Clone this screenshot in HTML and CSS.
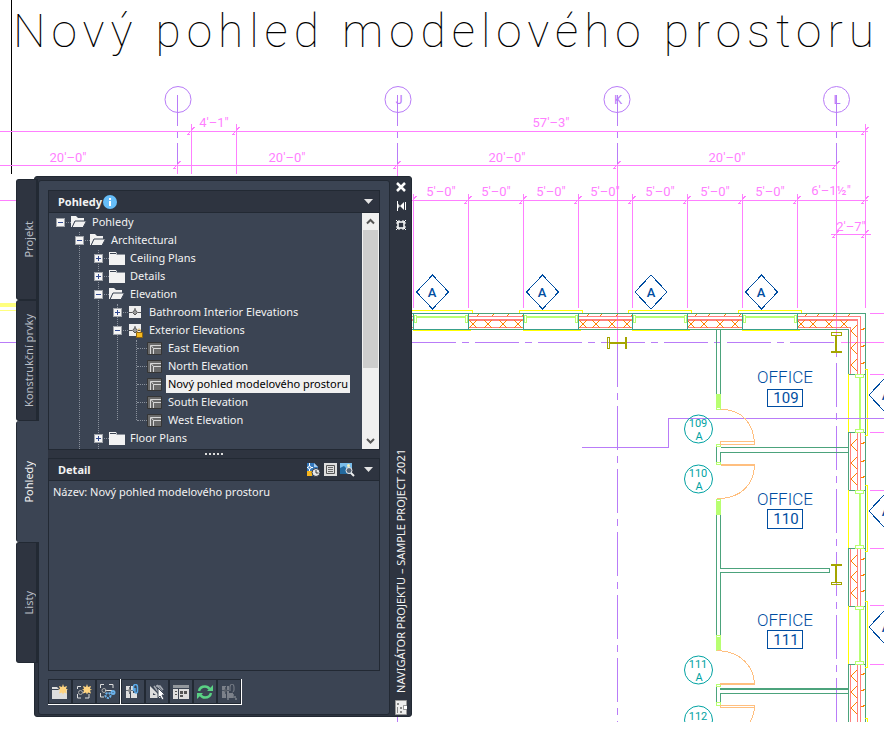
FILE: index.html
```html
<!DOCTYPE html>
<html lang="cs">
<head>
<meta charset="utf-8">
<title>Navigátor projektu</title>
<link rel="stylesheet" href="styles.css">
</head>
<body>
<main class="workspace">
<svg class="drawing" viewBox="0 0 896 733" preserveAspectRatio="xMinYMin meet">
  <defs>
    <clipPath id="sheet"><rect width="884" height="722"/></clipPath>
    <path id="tick" class="dim-line" d="M-4 4L4 -4M-4 3L-1 3M1 -2L4 -4"/>
    <path id="diamond" class="tag-line" d="M0 -17L16 0L0 17L-16 0Z"/>
    <path id="cross" class="hatch" d="M-4 -4L4 4M4 -4L-4 4M4 -8L6 -10"/>
    <path id="chev" class="hatch" d="M6 -6L0 0L6 6M10 -1L15 -3"/>
    <g id="window-h">
      <path class="yellow" d="M-4 0V-2.500H59V0M-1 17.500H57"/>
      <path class="teal-wall" d="M0 .5V16.500H55V.5Z"/>
      <path class="glass thick" d="M1 4H54"/>
      <path class="glass paper" d="M1 2.500H3V9.500H1ZM52 2.500H54V9.500H52Z"/>
    </g>
    <g id="window-v">
      <rect class="paper-fill" x="848" y="0" width="20" height="58"/>
      <path class="yellow" d="M848.500 0V58M865 -4.500H867.500V61.500H865"/>
      <path class="wall" d="M849 .5H866M849 58.500H866M865.500 0V58"/>
      <path class="glass thick" d="M860 2V56"/>
      <path class="glass paper" d="M855.500 .5H863.500V3.500H855.500ZM855.500 55.500H863.500V58.500H855.500Z"/>
    </g>
  </defs>

  <g clip-path="url(#sheet)">
    <text class="sheet-title" x="13" y="47">Nový pohled modelového prostoru</text>
    <path class="ink" d="M11.500 0V174"/>

    <g class="grid">
      <circle cx="178" cy="99.500" r="13"/><circle cx="398" cy="99.500" r="13"/>
      <circle cx="617" cy="99.500" r="13"/><circle cx="836.500" cy="99.500" r="13"/>
      <path d="M177.500 95V126M177.500 132V138M177.500 143V166M397.500 95V126M397.500 132V138M397.500 143V166M617.500 95V126M617.500 132V138M617.500 143V166M836.500 95V126M836.500 132V138M836.500 143V166"/>
      <path d="M397.500 717V722M0 342.500H16"/>
      <path class="dashed" d="M412 342.500H836M617.500 343V722M836.500 300V722"/>
      <path d="M582 447.500H668.500V418.500H884"/>
    </g>
    <g class="grid-label">
      <text x="399" y="104">J</text><text x="618" y="104">K</text><text x="837" y="104">L</text>
    </g>

    <path class="dim-line" d="M0 131.500H868M0 165.500H837M0 200.500H16M412 200.500H868M831 234.500H871
      M191.500 124V174M236.500 124V174M865.500 124V308M177.500 166V174M397.500 166V176M617.500 166V342M836.500 166V342
      M413.500 194V308M468.500 194V308M523.500 194V308M578.500 194V308M632.500 194V308M687.500 194V308M742.500 194V308M797.500 194V308
      M841 342.500H884M870 313.500H884M870 374.500H884M870 432.500H884M870 490.500H884M870 548.500H884M870 605.500H884M870 664.500H884"/>
    <g>
      <use href="#tick" x="191" y="131"/><use href="#tick" x="236" y="131"/><use href="#tick" x="865" y="131"/>
      <use href="#tick" x="177" y="165"/><use href="#tick" x="397" y="165"/><use href="#tick" x="617" y="165"/><use href="#tick" x="836" y="165"/>
      <use href="#tick" x="413" y="200"/><use href="#tick" x="468" y="200"/><use href="#tick" x="523" y="200"/><use href="#tick" x="578" y="200"/>
      <use href="#tick" x="632" y="200"/><use href="#tick" x="687" y="200"/><use href="#tick" x="742" y="200"/><use href="#tick" x="797" y="200"/><use href="#tick" x="865" y="200"/>
      <use href="#tick" x="836" y="234"/><use href="#tick" x="865" y="234"/>
    </g>
    <g class="dim-text">
      <text x="68" y="162">20'–0"</text><text x="214" y="127">4'–1"</text><text x="287" y="162">20'–0"</text>
      <text x="551" y="127">57'–3"</text><text x="507" y="162">20'–0"</text><text x="727" y="162">20'–0"</text>
      <text x="441" y="196">5'–0"</text><text x="496" y="196">5'–0"</text><text x="551" y="196">5'–0"</text><text x="605" y="196">5'–0"</text>
      <text x="660" y="196">5'–0"</text><text x="715" y="196">5'–0"</text><text x="770" y="196">5'–0"</text>
      <text x="831" y="195">6'–1½"</text><text x="851" y="231">2'–7"</text>
    </g>

    <path class="pale-yellow" d="M0 305H16"/><path class="pale-yellow thin" d="M0 310.500H16"/>

    <path class="brick" d="M412 316.500H860.500V722M412 327.500H850.500V722M412 319.500H857.500V722M412 320.500H857"/>
    <g>
      <use href="#cross" x="473" y="324"/><use href="#cross" x="488" y="324"/><use href="#cross" x="503" y="324"/><use href="#cross" x="518" y="324"/>
      <use href="#cross" x="583" y="324"/><use href="#cross" x="596" y="324"/><use href="#cross" x="612" y="324"/><use href="#cross" x="627" y="324"/>
      <use href="#cross" x="691" y="324"/><use href="#cross" x="704" y="324"/><use href="#cross" x="720" y="324"/><use href="#cross" x="735" y="324"/>
      <use href="#cross" x="801" y="324"/><use href="#cross" x="813" y="324"/><use href="#cross" x="829" y="324"/><use href="#cross" x="844" y="324"/>
      <use href="#chev" x="851" y="331"/><use href="#chev" x="851" y="348"/><use href="#chev" x="851" y="365"/>
      <use href="#chev" x="851" y="445"/><use href="#chev" x="851" y="463"/><use href="#chev" x="851" y="479"/>
      <use href="#chev" x="851" y="561"/><use href="#chev" x="851" y="577"/><use href="#chev" x="851" y="593"/>
      <use href="#chev" x="851" y="676"/><use href="#chev" x="851" y="692"/><use href="#chev" x="851" y="708"/>
    </g>
    <path class="wall" d="M412 313.500H865.500V722M412 329.500H848.500V722"/>
    <g>
      <rect class="paper-fill" x="414" y="314" width="54" height="15"/><rect class="paper-fill" x="523" y="314" width="55" height="15"/>
      <rect class="paper-fill" x="632" y="314" width="55" height="15"/><rect class="paper-fill" x="743" y="314" width="54" height="15"/>
    </g>
    <use href="#window-h" x="413.500" y="313"/><use href="#window-h" x="523.500" y="313"/>
    <use href="#window-h" x="632.500" y="313"/><use href="#window-h" x="742.500" y="313"/>
    <use href="#window-v" y="374"/><use href="#window-v" y="490"/><use href="#window-v" y="606"/>
    <path class="yellow" d="M865 718.500H867.500V722"/>
    <path class="grid-line" d="M848 418.500H884"/>

    <path class="wall" d="M716.500 330V394M720.500 330V394M716.500 515V635M720.500 515V568.500H829.500V572.500H720.500V635
      M716.500 446V465M720.500 452V465M720.500 447.500H848M720.500 452.500H848
      M716.500 687V704M720.500 693V704M720 688.500H848M720 689.500H848M720 693.500H848"/>
    <path class="glass-fill" d="M716 394H721V410H716ZM716 499H721V515H716ZM716 635H721V651H716Z"/>
    <path class="glass paper" d="M716.500 407.500H720.500V409.500H716.500ZM716.500 444.500H720.500V446.500H716.500ZM716.500 462.500H720.500V464.500H716.500ZM716.500 499.500H720.500V501.500H716.500ZM716.500 635.500H720.500V637.500H716.500ZM716.500 684.500H720.500V686.500H716.500ZM716.500 702.500H720.500V705.500H716.500Z"/>
    <path class="door" d="M721 409.500C741 409 754 423 754.500 444.500M720.500 441.500H754.500V444.500H720.500Z
      M721 464.500H755M721 465.500H754.500C754 484 741 499 717 498.500
      M717 650.500C740 651 754 666 754.500 684M720 683.500H755M720 684.500H755M720.500 705.500H754.500V707.500H720.500ZM754.500 707Q754 715 750 722"/>

    <path class="column" d="M607.500 337.500H609.500V348.500H607.500ZM610 342.500H626M610 343.500H626M625.500 337V349M626.500 337V349
      M831.500 332.500H841.500V335.500H831.500ZM835.500 336V352M836.500 336V352M831 351.500H842M831 352.500H842
      M831 564.500H842M831 565.500H842M835.500 566V582M836.500 566V582M831.500 582.500H841.500V584.500H831.500Z"/>

    <g>
      <use href="#diamond" x="432.500" y="292"/><use href="#diamond" x="542.500" y="292"/><use href="#diamond" x="651" y="292"/><use href="#diamond" x="761.500" y="292"/>
      <use href="#diamond" x="885" y="395"/><use href="#diamond" x="885" y="511"/><use href="#diamond" x="885" y="627"/>
    </g>
    <g class="tag-text">
      <text x="432" y="297">A</text><text x="542" y="297">A</text><text x="651" y="297">A</text><text x="761" y="297">A</text>
      <text x="886" y="400">A</text><text x="886" y="516">A</text><text x="886" y="632">A</text>
    </g>

    <g class="room">
      <text x="785" y="383">OFFICE</text><text x="785" y="505">OFFICE</text><text x="785" y="626">OFFICE</text>
      <text class="room-no" x="786" y="403">109</text><text class="room-no" x="786" y="524">110</text><text class="room-no" x="786" y="645">111</text>
      <path class="tag-line" d="M767.500 389.500H802.500V406.500H767.500ZM767.500 509.500H802.500V528.500H767.500ZM767.500 630.500H802.500V648.500H767.500Z"/>
    </g>
    <g class="door-tag">
      <circle cx="698.500" cy="429" r="14"/><circle cx="698.500" cy="479" r="14"/><circle cx="698.500" cy="670" r="14"/><circle cx="698.500" cy="720" r="14"/>
      <text x="698" y="427">109</text><text x="699" y="440">A</text>
      <text x="698" y="477">110</text><text x="699" y="490">A</text>
      <text x="698" y="668">111</text><text x="699" y="681">A</text>
      <text x="698" y="720">112</text>
    </g>
  </g>
</svg>

<section class="palette" aria-label="Navigátor projektu">
  <div class="tabs" role="tablist">
    <button class="tab" role="tab"><span>Projekt</span></button>
    <button class="tab" role="tab"><span>Konstrukční prvky</span></button>
    <button class="tab active" role="tab" aria-selected="true"><span>Pohledy</span></button>
    <button class="tab" role="tab"><span>Listy</span></button>
  </div>

  <div class="shell">
    <div class="content">
      <header class="section-head">
        <h2>Pohledy</h2>
        <svg class="info" viewBox="0 0 14 14"><circle cx="7" cy="7" r="7" fill="#66bdf8"/><path d="M6 3h2v2H6zM6 6h2v5H6z" fill="#fff"/></svg>
        <button class="caret" aria-label="Nabídka pohledů"></button>
      </header>

      <div class="tree-box">
        <ul class="tree">
          <li><div class="row"><button class="toggle" aria-label="Sbalit"></button><svg class="icon"><use href="#folder-open"/></svg><span class="label">Pohledy</span></div>
            <ul class="running">
              <li><div class="row"><button class="toggle" aria-label="Sbalit"></button><svg class="icon"><use href="#folder-open"/></svg><span class="label">Architectural</span></div>
                <ul class="running">
                  <li><div class="row"><button class="toggle plus" aria-label="Rozbalit"></button><svg class="icon"><use href="#folder"/></svg><span class="label">Ceiling Plans</span></div></li>
                  <li><div class="row"><button class="toggle plus" aria-label="Rozbalit"></button><svg class="icon"><use href="#folder"/></svg><span class="label">Details</span></div></li>
                  <li><div class="row"><button class="toggle" aria-label="Sbalit"></button><svg class="icon"><use href="#folder-open"/></svg><span class="label">Elevation</span></div>
                    <ul>
                      <li><div class="row"><button class="toggle plus" aria-label="Rozbalit"></button><svg class="icon"><use href="#view"/></svg><span class="label">Bathroom Interior Elevations</span></div></li>
                      <li><div class="row"><button class="toggle" aria-label="Sbalit"></button><svg class="icon"><use href="#view"/><use href="#lock"/></svg><span class="label">Exterior Elevations</span></div>
                        <ul>
                          <li><div class="row leaf"><svg class="icon"><use href="#space"/></svg><span class="label">East Elevation</span></div></li>
                          <li><div class="row leaf"><svg class="icon"><use href="#space"/></svg><span class="label">North Elevation</span></div></li>
                          <li><div class="row leaf"><svg class="icon"><use href="#space"/></svg><span class="label selected">Nový pohled modelového prostoru</span></div></li>
                          <li><div class="row leaf"><svg class="icon"><use href="#space"/></svg><span class="label">South Elevation</span></div></li>
                          <li><div class="row leaf"><svg class="icon"><use href="#space"/></svg><span class="label">West Elevation</span></div></li>
                        </ul>
                      </li>
                    </ul>
                  </li>
                  <li><div class="row"><button class="toggle plus" aria-label="Rozbalit"></button><svg class="icon"><use href="#folder"/></svg><span class="label">Floor Plans</span></div></li>
                </ul>
              </li>
            </ul>
          </li>
        </ul>
        <div class="scrollbar">
          <button aria-label="Nahoru"><svg viewBox="0 0 17 17"><path d="M5 10.500L8.500 7L12 10.500"/></svg></button>
          <div class="track"><div class="thumb"></div></div>
          <button aria-label="Dolů"><svg viewBox="0 0 17 17"><path d="M5 7L8.500 10.500L12 7"/></svg></button>
        </div>
      </div>

      <div class="splitter"><i></i><i></i><i></i><i></i><i></i></div>

      <header class="section-head">
        <h2>Detail</h2>
        <div class="head-tools">
          <button aria-label="Historie výkresu"><svg viewBox="0 0 15 15"><path d="M1 1h7l4 4v9H1z" fill="#3478bd"/><path d="M8 1v4h4z" fill="#a8cdf0"/><path d="M1 9h5v5H1z" fill="#f7b51c"/><path d="M3.500 1v8M1 5.500h6" stroke="#fff" fill="none"/><circle cx="3.500" cy="5.500" r="1.500" fill="#3478bd" stroke="#fff"/><circle cx="10" cy="10.500" r="4" fill="#e8e8e8" stroke="#2e3440"/><path d="M10 8v3h2.500" stroke="#333" fill="none"/></svg></button>
          <button aria-label="Popis"><svg viewBox="0 0 15 15"><path d="M1 1h13v13H1z" fill="#dedede"/><path d="M3.500 3.500h8v8h-8z" fill="none" stroke="#555"/><path d="M5 5.500h5M5 7.500h5M5 9.500h5" stroke="#666"/></svg></button>
          <button aria-label="Náhled"><svg viewBox="0 0 15 15"><path d="M0 1h12v11H0z" fill="#79bce9"/><path d="M0 6l4-2 5 5v3H0z" fill="#23699e"/><circle cx="8.500" cy="3.500" r="1.500" fill="#f7efb5"/><circle cx="9" cy="8.500" r="3" fill="#596575" stroke="#eee"/><path d="M11 11l3 3" stroke="#eee" stroke-width="2"/></svg></button>
        </div>
        <button class="caret" aria-label="Nabídka detailu"></button>
      </header>
      <div class="detail">Název: Nový pohled modelového prostoru</div>

      <div class="toolbar">
        <div class="group">
          <button aria-label="Nová kategorie"><svg viewBox="0 0 16 16"><path d="M0 3h5l2 2h8v10H0z" fill="#dedede"/><path d="M0 5.500h9" stroke="#3b4453"/><use href="#spark"/></svg></button>
          <button aria-label="Nový pohled"><svg viewBox="0 0 16 16"><path d="M1.500 5V2.500H5M1.500 10v4H5M9 14h4v-4" fill="none" stroke="#dedede"/><circle cx="4.500" cy="8.500" r="2" fill="none" stroke="#aaa"/><path d="M7 8.500h2" stroke="#aaa"/><use href="#spark"/></svg></button>
          <button aria-label="Vlastnosti pohledu"><svg viewBox="0 0 16 16"><path d="M.5 4V.5H4M9 .5h4V4M.5 9v4H4M5 6.500h7" fill="none" stroke="#dedede"/><circle cx="4" cy="6.500" r="2" fill="none" stroke="#aaa"/><circle cx="8" cy="11.500" r="2.500" fill="none" stroke="#6ab2ec" stroke-width="2" stroke-dasharray="2 1"/><circle cx="13" cy="8.500" r="1.500" fill="none" stroke="#6ab2ec" stroke-width="2"/></svg></button>
        </div>
        <div class="group">
          <button aria-label="Externí reference"><svg viewBox="0 0 16 16"><use href="#xref"/><path d="M8.500 7V3q0-2.500 2-2.500T12.500 3v4q0 2-1.500 2T10 7V4" fill="none" stroke="#5aa8e6" stroke-width="1.500"/></svg></button>
          <button aria-label="Obsah výkresu"><svg viewBox="0 0 16 16"><path d="M1 2v12h12z" fill="#dedede"/><path d="M4 9v2h3z" fill="#3b4453"/><path d="M5 2l8 11M8 1l6 9M7 2h4l3 4" fill="none" stroke="#a5aab2" stroke-width="1.500"/><path d="M9 4v10l2-2 2 4 2-1-2-4h3z" fill="#fff" stroke="#3b4453"/></svg></button>
          <button aria-label="Upravit"><svg viewBox="0 0 16 16"><path d="M0 1h16v14H0z" fill="#dedede"/><path d="M0 1h16v3H0z" fill="#92979d"/><path d="M5.500 4v11M0 4.500h16" stroke="#3b4453"/><path d="M2 7.500h2M2 10.500h2" stroke="#555"/><path d="M7 7h3v3H7zM11 7h3v3h-3zM7 11h3v2H7z" fill="#555"/></svg></button>
          <button aria-label="Obnovit"><svg viewBox="0 0 16 16"><path d="M2 7q1-4.500 6-4.500 3 0 4.500 2.500M14 9q-1 4.500-6 4.500-3 0-4.500-2.500" fill="none" stroke="#5ad184" stroke-width="2.500"/><path d="M16 1v6h-6zM0 15V9h6z" fill="#5ad184"/></svg></button>
          <button aria-label="Připojit" disabled><svg viewBox="0 0 16 16"><g opacity=".4"><use href="#xref"/><path d="M9 7V3q0-3 2-3t2 3v3q0 2-1.500 2" fill="none" stroke="#ddd"/><path d="M6 11h3M11 11h2M7 13h2M11 13h4M14 15h2M6 15h2" stroke="#ddd" stroke-width="1.500"/></g></svg></button>
        </div>
      </div>
    </div>

    <aside class="bar">
      <button aria-label="Zavřít"><svg viewBox="0 0 12 12"><path d="M2 2l8 8M10 2l-8 8" stroke="#fff" stroke-width="2.500"/></svg></button>
      <button aria-label="Automaticky skrýt"><svg viewBox="0 0 12 12"><path d="M2.500 1v10" stroke="#fff"/><path d="M3 3.500l2 2.500-2 2.500z" fill="#ddd"/><path d="M9 2v8L5 6z" fill="#fff"/><path d="M10.500 2v8" stroke="#fff"/></svg></button>
      <button aria-label="Vlastnosti"><svg viewBox="0 0 12 12"><path d="M4 1v2M8 1v2M4 9v2M8 9v2M1 4h2M1 8h2M9 4h2M9 8h2M1 1l2 2M11 1l-2 2M1 11l2-2M11 11l-2-2" stroke="#fff"/><path d="M3 3h6v6H3z" fill="none" stroke="#fff" stroke-width="1.500"/></svg></button>
      <h1>NAVIGÁTOR PROJEKTU – SAMPLE PROJECT 2021</h1>
      <svg class="app-mark" viewBox="0 0 12 15"><path d="M.5.5h11v5h-3v4h3v5H.5z" fill="#eee" stroke="#999"/><path d="M2 3h2v2H2zM5 7h2v2H5zM5 11h2v2H5zM2 7h1v6H2z" fill="#888"/><path d="M9 6h3v3H9z" fill="#fff"/></svg>
    </aside>
  </div>
</section>
</main>

<svg class="symbols" aria-hidden="true">
  <symbol id="folder" viewBox="0 0 16 16"><path d="M0 3V2h7l1 2h8v11H0z" fill="#f2f2f2"/><path d="M1 3.500h6" stroke="#3b4453"/><path d="M7.500 4.500H16" stroke="#8b919a"/></symbol>
  <symbol id="folder-open" viewBox="0 0 16 16"><path d="M0 2h5l2 2h6v3H4l-3 6H0z" fill="#f2f2f2"/><path d="M4 7h11.500L12 13.500H1z" fill="#f2f2f2" stroke="#3b4453"/></symbol>
  <symbol id="view" viewBox="0 0 16 16"><path d="M1 2h12v12H1z" fill="#eee"/><path d="M4.500 8.500L7 5.500l2.500 3L7 11z" fill="#999" stroke="#555"/><path d="M7 4v2M1 8.500h3M10 8.500h3" stroke="#555" fill="none"/></symbol>
  <symbol id="lock" viewBox="0 0 16 16"><path d="M9.500 10V8.500q0-1.500 1.500-1.500t1.500 1.500V10" fill="none" stroke="#ddb76a"/><path d="M8.500 10.500h6v5h-6z" fill="#f5b91e" stroke="#8e6410"/></symbol>
  <symbol id="space" viewBox="0 0 16 16"><path d="M.5 2.500h14v12H.5z" fill="#6a6a6a" stroke="#353535"/><path d="M3.500 14V5.500H14M6.500 14V8.500H14M4 5.500l2.500 3" stroke="#d8d8d8" fill="none"/></symbol>
  <symbol id="spark" viewBox="0 0 16 16"><path d="M11 0l1 3 3-1-1 3 2 .5-2 1 1 3-3-1-1 2-1-2-3 1 1-3-2-1 2-.5-1-3 3 1z" fill="#ffd480"/></symbol>
  <symbol id="xref" viewBox="0 0 16 16"><path d="M1 2h4v12H1zM6 2h2v7h4v5H6z" fill="#dedede"/><path d="M1 6.500h7M4.500 3v7" stroke="#69717d"/><circle cx="4.500" cy="6.500" r="1.500" fill="#888"/></symbol>
</svg>
</body>
</html>
```
FILE: styles.css
```css
:root {
  --face: #3b4453;
  --dark: #2e3440;
  --edge: #222933;
  --text: #f2f2f2;
}
* { box-sizing: border-box; }
body {
  margin: 0;
  background: #fff;
  color: var(--text);
  font: 11px/18px "Noto Sans", "Open Sans", sans-serif;
}
button {
  padding: 0;
  border: 0;
  background: none;
  color: inherit;
  font: inherit;
}
h1, h2 { margin: 0; font-size: 11px; }
ul { margin: 0; padding: 0; list-style: none; }
svg { display: block; }
.symbols { position: absolute; width: 0; height: 0; }

.workspace { position: relative; min-width: 412px; }

/* Floor plan */
.drawing { width: 100%; font-family: Roboto, sans-serif; font-weight: 400; }
.drawing path { fill: none; shape-rendering: crispEdges; }
.sheet-title { font-size: 46px; font-weight: 100; letter-spacing: 6px; fill: #000; }
.ink { stroke: #000; }
.grid { fill: none; stroke: #b97cf8; }
.grid-line { stroke: #b97cf8; }
.grid .dashed { stroke-dasharray: 44 6 7 6; }
.grid-label { fill: #b97cf8; font-size: 13px; text-anchor: middle; }
.dim-line { stroke: #ff7fff; }
.dim-text { fill: #ff7fff; font-size: 13px; text-anchor: middle; }
.tag-line { stroke: #004da1; }
.tag-text { fill: #004da1; font-size: 13px; font-weight: 500; text-anchor: middle; }
.room { fill: #004da1; font-size: 17px; font-weight: 300; text-anchor: middle; }
.room-no { font-size: 15px; font-weight: 400; }
.door-tag { fill: #00a2a2; font-size: 11px; text-anchor: middle; }
.door-tag circle { fill: none; stroke: #00a2a2; }
.wall { stroke: #4ca37c; }
.teal-wall { stroke: #38a08c; }
.brick { stroke: #ff7f7f; }
.hatch { stroke: #ff8000; }
.yellow { stroke: #ff0; }
.pale-yellow { stroke: #ffff7f; stroke-width: 4; }
.pale-yellow.thin { stroke-width: 1; }
.glass { stroke: #b8ff71; }
.thick { stroke-width: 2; }
.drawing .paper, .drawing .paper-fill { fill: #fff; }
.drawing .glass-fill { fill: #b8ff71; }
.door { stroke: #ffbf7f; }
.column { stroke: #a5a500; }

/* Palette window */
.palette {
  position: absolute;
  top: 176px;
  left: 16px;
  display: flex;
}
.tabs {
  z-index: 1;
  display: flex;
  flex-direction: column;
  width: 22px;
  padding-top: 3px;
}
.tab {
  display: flex;
  align-items: center;
  justify-content: center;
  height: 121px;
  padding-left: 4px;
  border: 1px solid var(--edge);
  border-right-width: 2px;
  border-radius: 3px 0 0 3px;
  background: var(--dark);
  color: #b9bec6;
}
.tab span, .bar h1 { writing-mode: vertical-rl; transform: rotate(180deg); white-space: nowrap; }
.tab.active {
  width: 24px;
  padding-right: 3px;
  border-width: 0 0 0 1px;
  background: var(--face);
  color: var(--text);
}
.shell {
  display: flex;
  width: 378px;
  margin-left: -4px;
  padding: 3px 0 1px 3px;
  border: 1px solid var(--edge);
  border-radius: 3px;
  background: var(--dark);
}
.content {
  flex: 1;
  min-width: 0;
  padding: 9px;
  border: 1px solid var(--edge);
  border-radius: 3px;
  background: var(--face);
}
.section-head {
  display: flex;
  align-items: center;
  height: 23px;
  padding: 0 6px 0 9px;
  border: 1px solid var(--edge);
  background: var(--dark);
}
.info { width: 14px; height: 14px; margin-left: 1px; }
.caret {
  width: 9px;
  height: 5px;
  margin-left: auto;
  background: #e4e4e4;
  clip-path: polygon(0 0, 100% 0, 50% 100%);
}
.head-tools { display: flex; gap: 2px; margin-left: auto; }
.head-tools svg { width: 15px; height: 15px; }
.head-tools + .caret { margin-left: 9px; }

.tree-box {
  display: flex;
  height: 237px;
  border: 1px solid var(--edge);
  border-top: 0;
  overflow: hidden;
}
.tree { flex: 1; min-width: 0; }
.tree ul { position: relative; padding-left: 19px; }
.tree ul::before {
  content: "";
  position: absolute;
  top: 1px;
  bottom: 9px;
  left: 30px;
  border-left: 1px dotted #8a919c;
}
.tree .running::before { bottom: -2px; }
.row {
  position: relative;
  display: flex;
  align-items: center;
  height: 18px;
  padding-left: 7px;
  white-space: nowrap;
}
.row::before {
  content: "";
  position: absolute;
  top: 9px;
  left: 12px;
  width: 10px;
  border-top: 1px dotted #8a919c;
}
.leaf { padding-left: 22px; }
.toggle {
  position: relative;
  width: 9px;
  height: 9px;
  margin-right: 6px;
  border: 1px solid #a0a4aa;
  background: linear-gradient(#334b91, #334b91) center / 5px 1px no-repeat #f5f5f5;
}
.plus {
  background: linear-gradient(#334b91, #334b91) center / 5px 1px no-repeat,
    linear-gradient(#334b91, #334b91) center / 1px 5px no-repeat #f5f5f5;
}
.icon { position: relative; flex: none; width: 16px; height: 16px; margin-right: 3px; }
.label { padding: 0 2px; }
.selected { background: #f0f0f0; color: #000; }

.scrollbar {
  display: flex;
  flex-direction: column;
  width: 17px;
  background: #f0f0f0;
}
.scrollbar button { height: 17px; }
.scrollbar path { fill: none; stroke: #555; stroke-width: 2; }
.track { flex: 1; padding: 0 1px; }
.thumb { height: 138px; background: #cdcdcd; }

.splitter {
  display: flex;
  align-items: center;
  justify-content: center;
  gap: 2px;
  height: 8px;
  background: var(--dark);
}
.splitter i { width: 2px; height: 2px; background: #ddd; }
.detail {
  height: 190px;
  padding: 2px 4px;
  border: 1px solid var(--edge);
  border-top: 0;
}
.toolbar { display: flex; margin-top: 8px; }
.group { display: flex; border: solid #fff; border-width: 0 1px 1px 0; }
.group button {
  display: flex;
  align-items: center;
  justify-content: center;
  width: 24px;
  height: 25px;
  border: 1px solid var(--edge);
}
.group svg { width: 16px; height: 16px; }

.bar {
  display: flex;
  flex-direction: column;
  align-items: center;
  gap: 7px;
  width: 21px;
  padding: 1px 0 0;
}
.bar button svg { width: 12px; height: 12px; }
.bar h1 { margin-top: auto; font-weight: 400; }
.app-mark { width: 12px; height: 15px; }
```
